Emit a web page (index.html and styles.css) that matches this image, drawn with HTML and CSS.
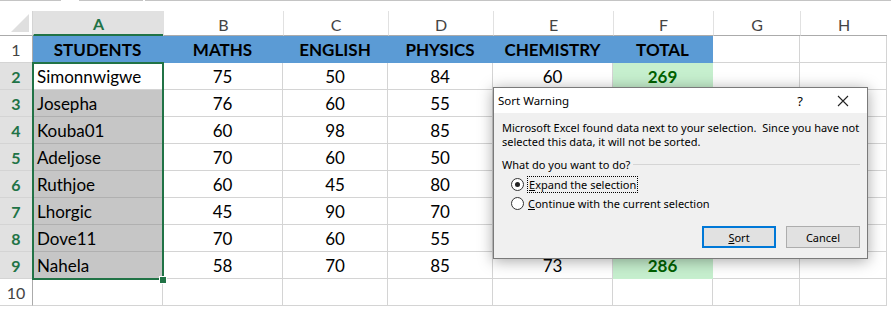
FILE: index.html
```html
<!DOCTYPE html>
<html>
<head>
<meta charset="utf-8">
<link rel="stylesheet" href="styles.css">
<title>Sort Warning</title>
</head>
<body>
<div class="ribbon-edge">
  <span class="edge e1"></span><span class="edge e2"></span><span class="edge e3"></span>
</div>
<div class="sheet-wrap">
<div class="sheet">
  <div class="corner"></div>
  <div class="colhead sel">A</div>
  <div class="colhead">B</div>
  <div class="colhead">C</div>
  <div class="colhead">D</div>
  <div class="colhead">E</div>
  <div class="colhead">F</div>
  <div class="colhead">G</div>
  <div class="colhead">H</div>

  <div class="rowhead">1</div>
  <div class="cell head">STUDENTS</div>
  <div class="cell head">MATHS</div>
  <div class="cell head">ENGLISH</div>
  <div class="cell head">PHYSICS</div>
  <div class="cell head">CHEMISTRY</div>
  <div class="cell head">TOTAL</div>
  <div class="cell"></div>
  <div class="cell"></div>

  <div class="rowhead sel">2</div>
  <div class="cell name active">Simonnwigwe</div>
  <div class="cell">75</div>
  <div class="cell">50</div>
  <div class="cell">84</div>
  <div class="cell">60</div>
  <div class="cell total">269</div>
  <div class="cell"></div>
  <div class="cell"></div>

  <div class="rowhead sel">3</div>
  <div class="cell name picked">Josepha</div>
  <div class="cell">76</div>
  <div class="cell">60</div>
  <div class="cell">55</div>
  <div class="cell"></div>
  <div class="cell total"></div>
  <div class="cell"></div>
  <div class="cell"></div>

  <div class="rowhead sel">4</div>
  <div class="cell name picked">Kouba01</div>
  <div class="cell">60</div>
  <div class="cell">98</div>
  <div class="cell">85</div>
  <div class="cell"></div>
  <div class="cell total"></div>
  <div class="cell"></div>
  <div class="cell"></div>

  <div class="rowhead sel">5</div>
  <div class="cell name picked">Adeljose</div>
  <div class="cell">70</div>
  <div class="cell">60</div>
  <div class="cell">50</div>
  <div class="cell"></div>
  <div class="cell total"></div>
  <div class="cell"></div>
  <div class="cell"></div>

  <div class="rowhead sel">6</div>
  <div class="cell name picked">Ruthjoe</div>
  <div class="cell">60</div>
  <div class="cell">45</div>
  <div class="cell">80</div>
  <div class="cell"></div>
  <div class="cell total"></div>
  <div class="cell"></div>
  <div class="cell"></div>

  <div class="rowhead sel">7</div>
  <div class="cell name picked">Lhorgic</div>
  <div class="cell">45</div>
  <div class="cell">90</div>
  <div class="cell">70</div>
  <div class="cell"></div>
  <div class="cell total"></div>
  <div class="cell"></div>
  <div class="cell"></div>

  <div class="rowhead sel">8</div>
  <div class="cell name picked">Dove11</div>
  <div class="cell">70</div>
  <div class="cell">60</div>
  <div class="cell">55</div>
  <div class="cell"></div>
  <div class="cell total"></div>
  <div class="cell"></div>
  <div class="cell"></div>

  <div class="rowhead sel">9</div>
  <div class="cell name picked">Nahela</div>
  <div class="cell">58</div>
  <div class="cell">70</div>
  <div class="cell">85</div>
  <div class="cell">73</div>
  <div class="cell total">286</div>
  <div class="cell"></div>
  <div class="cell"></div>

  <div class="rowhead">10</div>
  <div class="cell"></div>
  <div class="cell"></div>
  <div class="cell"></div>
  <div class="cell"></div>
  <div class="cell"></div>
  <div class="cell"></div>
  <div class="cell"></div>
  <div class="cell"></div>
</div>
<div class="selection"></div>
<div class="fill-handle"></div>
</div>

<div class="dialog">
  <div class="titlebar">
    <span class="title">Sort Warning</span>
    <span class="help">?</span>
    <svg class="close" width="12" height="12" viewBox="0 0 12 12"><path d="M1 1L11 11M11 1L1 11" stroke="#222" stroke-width="1.1" fill="none"/></svg>
  </div>
  <div class="dlg-body">
    <p class="msg">Microsoft Excel found data next to your selection.&nbsp; Since you have not selected this data, it will not be sorted.</p>
    <div class="group"><span>What do you want to do?</span><span class="rule"></span></div>
    <label class="radio"><span class="dot on"></span><span class="focus"><u>E</u>xpand the selection</span></label>
    <label class="radio"><span class="dot"></span><span><u>C</u>ontinue with the current selection</span></label>
    <div class="buttons">
      <button class="btn default"><u>S</u>ort</button>
      <button class="btn">Cancel</button>
    </div>
  </div>
</div>
</body>
</html>
```

FILE: styles.css
```css
html, body {
  margin: 0;
  padding: 0;
  background: white;
}
body {
  width: 891px;
  height: 310px;
  overflow: hidden;
  position: relative;
  font-family: Lato, "Liberation Sans", sans-serif;
}
.ribbon-edge {
  height: 11px;
  position: relative;
}
.edge {
  position: absolute;
  top: 0;
  height: 1px;
  background: #c4c4c4;
}
.e1 { left: 0; width: 61px; }
.e2 { left: 79px; width: 64px; }
.e3 { left: 145px; right: 0; }

.sheet-wrap {
  position: relative;
}
.sheet {
  display: grid;
  grid-template-columns: 33px 130px 120px 105px 105px 120px 100px 87px 87px;
  grid-template-rows: 25px repeat(10, 27px);
  font-size: 17px;
  color: #000;
}
.sheet > div {
  box-sizing: border-box;
  display: flex;
  align-items: center;
  justify-content: center;
  white-space: nowrap;
  overflow: hidden;
}
.corner {
  background: white;
  border-right: 1px solid #d4d4d4;
  border-bottom: 1px solid #ababab;
  position: relative;
}
.corner::after {
  content: "";
  position: absolute;
  right: 3px;
  bottom: 3px;
  width: 0;
  height: 0;
  border-left: 18px solid transparent;
  border-bottom: 18px solid #dfdfdf;
}
.colhead {
  color: #444;
  background: white;
  border-left: 1px solid #e1e1e1;
  border-bottom: 1px solid #ababab;
  font-size: 16px;
  padding-top: 2px;
}
.colhead.sel {
  background: #e1e1e1;
  color: #217346;
  font-weight: bold;
  border-bottom: 2px solid #217346;
}
.rowhead {
  color: #444;
  background: white;
  border-right: 1px solid #ababab;
  border-bottom: 1px solid #d4d4d4;
  font-size: 16px;
}
.rowhead.sel {
  background: #e1e1e1;
  color: #217346;
  font-weight: bold;
}
.cell {
  border-right: 1px solid #d4d4d4;
  border-bottom: 1px solid #d4d4d4;
}
.cell.head {
  background: #5b9bd5;
  font-weight: bold;
  border-right-color: #5b9bd5;
  border-bottom-color: #5b9bd5;
}
.cell.name {
  justify-content: flex-start;
  padding-left: 4px;
}
.cell.picked {
  background: #c6c6c6;
  border-bottom-color: #b0b0b0;
}
.cell.total {
  background: #c6efce;
  color: #006100;
  font-weight: bold;
  border-right-color: #c6efce;
  border-bottom-color: #c6efce;
}

.selection {
  position: absolute;
  left: 32px;
  top: 51px;
  width: 132px;
  height: 218px;
  border: 2px solid #217346;
  box-sizing: border-box;
}
.fill-handle {
  position: absolute;
  left: 159px;
  top: 265px;
  width: 6px;
  height: 6px;
  background: #217346;
  border: 1px solid white;
}

.dialog {
  position: absolute;
  left: 493px;
  top: 87px;
  width: 375px;
  height: 172px;
  box-sizing: border-box;
  border: 1px solid #7a7a7a;
  background: #f0f0f0;
  box-shadow: 0 2px 14px rgba(0, 0, 0, 0.35);
  font-family: "Noto Sans", "Liberation Sans", sans-serif;
  font-size: 11px;
  color: #000;
}
.titlebar {
  height: 25px;
  background: white;
  display: flex;
  align-items: center;
  padding-left: 4px;
}
.title {
  flex: 1;
  font-size: 11.5px;
}
.help {
  font-size: 13px;
  margin-right: 34px;
}
.close {
  margin-right: 18px;
}
.dlg-body {
  padding: 4px 7px 0 8px;
}
.msg {
  margin: 4px 0 0;
  line-height: 14px;
  width: 360px;
}
.group {
  display: flex;
  align-items: center;
  margin-top: 8px;
  height: 14px;
}
.rule {
  flex: 1;
  height: 1px;
  background: #d5d5d5;
  margin-left: 3px;
}
.radio {
  display: flex;
  align-items: center;
  margin-left: 9px;
  height: 19px;
}
.radio:first-of-type {
  margin-top: 4px;
}
.dot {
  width: 11px;
  height: 11px;
  border: 1px solid #333;
  border-radius: 50%;
  background: white;
  margin-right: 4px;
  position: relative;
}
.dot.on::after {
  content: "";
  position: absolute;
  left: 3px;
  top: 3px;
  width: 5px;
  height: 5px;
  border-radius: 50%;
  background: #222;
}
.focus {
  outline: 1px dotted #000;
  padding: 0 1px;
}
.buttons {
  display: flex;
  justify-content: flex-end;
  gap: 10px;
  margin-top: 13px;
}
.btn {
  font-family: "Noto Sans", "Liberation Sans", sans-serif;
  font-size: 11px;
  width: 74px;
  height: 22px;
  background: #e1e1e1;
  border: 1px solid #adadad;
  padding: 0;
  color: #000;
}
.btn.default {
  border: 2px solid #0078d7;
}
```
